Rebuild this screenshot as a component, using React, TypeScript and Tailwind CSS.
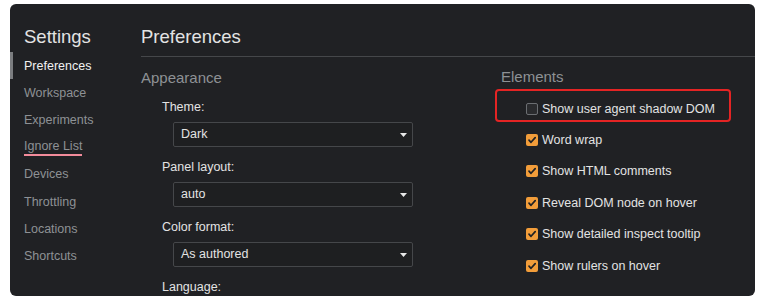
import React from 'react';

const font = { fontFamily: '"Liberation Sans", Arial, sans-serif' };

const navItems = [
  'Preferences',
  'Workspace',
  'Experiments',
  'Ignore List',
  'Devices',
  'Throttling',
  'Locations',
  'Shortcuts',
];

const elementOptions = [
  { label: 'Show user agent shadow DOM', checked: false, flagged: true },
  { label: 'Word wrap', checked: true },
  { label: 'Show HTML comments', checked: true },
  { label: 'Reveal DOM node on hover', checked: true },
  { label: 'Show detailed inspect tooltip', checked: true },
  { label: 'Show rulers on hover', checked: true },
];

function Select({ value }: { value: string }) {
  return (
    <div className="ml-[32px] flex h-[25px] w-[240px] items-center justify-between rounded-[2px] border border-[#45474a] bg-[#1e1f21] pl-[7px] pr-[5px]">
      <span className="text-[12.5px] text-[#e3e3e3]">{value}</span>
      <svg width="7" height="4" viewBox="0 0 7 4" aria-hidden>
        <path d="M0 0h7L3.5 4z" fill="#e8e8e8" />
      </svg>
    </div>
  );
}

function Checkbox({ checked }: { checked: boolean }) {
  if (!checked) {
    return (
      <span className="h-[12px] w-[12px] shrink-0 rounded-[2px] border border-[#6b6e72] bg-[#2a2b2e]" />
    );
  }
  return (
    <span className="flex h-[12px] w-[12px] shrink-0 items-center justify-center rounded-[2px] bg-[#f29d3a]">
      <svg width="10" height="10" viewBox="0 0 10 10" aria-hidden>
        <path
          d="M2 5.2l2 2.1L8.2 2.6"
          fill="none"
          stroke="#202124"
          strokeWidth="1.7"
          strokeLinecap="round"
          strokeLinejoin="round"
        />
      </svg>
    </span>
  );
}

export default function App() {
  return (
    <div className="h-[299px] w-[760px] bg-white pl-[10px] pt-[4px]" style={font}>
      <div className="flex h-[292px] w-[745px] overflow-hidden rounded-[6px] bg-[#202124]">
        {/* sidebar */}
        <div className="w-[131px] shrink-0">
          <div className="h-[48px] pl-[14px] pt-[22px] text-[18.5px] leading-[22px] text-[#e3e3e3]">
            Settings
          </div>
          {navItems.map((item, i) => (
            <div key={item} className="relative flex h-[27.2px] items-center pl-[14px]">
              {i === 0 && <span className="absolute left-0 top-0 h-full w-[3px] bg-[#7b7d80]" />}
              <span
                className={`text-[12.5px] leading-[16px] ${
                  i === 0 ? 'text-[#f1f1f1]' : 'text-[#8e9195]'
                } ${item === 'Ignore List' ? 'border-b-2 border-[#f28b9b]' : ''}`}
              >
                {item}
              </span>
            </div>
          ))}
        </div>

        {/* main */}
        <div className="flex-1">
          <div className="h-[53px] border-b border-[#45474a] pt-[22px] text-[18.5px] leading-[22px] text-[#e3e3e3]">
            Preferences
          </div>
          <div className="flex">
            <div className="w-[354px] shrink-0">
              <div className="mt-[12px] text-[15px] leading-[18px] text-[#8e9195]">Appearance</div>
              <div className="ml-[21px] mt-[12px] text-[12.5px] leading-[16px] text-[#e3e3e3]">Theme:</div>
              <div className="mt-[7px]">
                <Select value="Dark" />
              </div>
              <div className="ml-[21px] mt-[12px] text-[12.5px] leading-[16px] text-[#e3e3e3]">Panel layout:</div>
              <div className="mt-[7px]">
                <Select value="auto" />
              </div>
              <div className="ml-[21px] mt-[12px] text-[12.5px] leading-[16px] text-[#e3e3e3]">Color format:</div>
              <div className="mt-[7px]">
                <Select value="As authored" />
              </div>
              <div className="ml-[21px] mt-[12px] text-[12.5px] leading-[16px] text-[#e3e3e3]">Language:</div>
            </div>

            <div className="flex-1">
              <div className="ml-[6px] mt-[11px] text-[15px] leading-[18px] text-[#8e9195]">Elements</div>
              <div className="mt-[7px]">
                {elementOptions.map((opt) => (
                  <div key={opt.label} className="relative flex h-[31.4px] items-center gap-[4px] pl-[31px]">
                    {opt.flagged && (
                      <span className="absolute left-0 top-[-4px] h-[33px] w-[236px] rounded-[4px] border-2 border-[#e42424]" />
                    )}
                    <Checkbox checked={opt.checked} />
                    <span className="text-[12.5px] leading-[16px] text-[#e3e3e3]">{opt.label}</span>
                  </div>
                ))}
              </div>
            </div>
          </div>
        </div>
      </div>
    </div>
  );
}
